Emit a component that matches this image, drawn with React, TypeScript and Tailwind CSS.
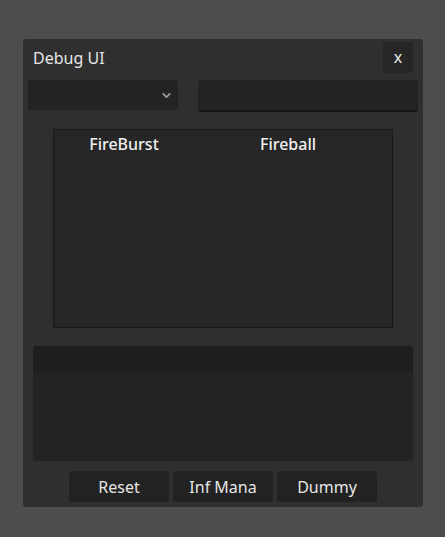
import { ChevronDown } from 'lucide-react';

const spells = ['FireBurst', 'Fireball'];
const actions = ['Reset', 'Inf Mana', 'Dummy'];

export default function App() {
  return (
    <div
      className="w-[445px] h-[537px] bg-[#4d4d4d] pt-[39px] pl-[23px]"
      style={{ fontFamily: '"Noto Sans", "Open Sans", sans-serif' }}
    >
      <div className="w-[400px] h-[468px] bg-[#2f2f2f] rounded-[3px] flex flex-col">
        {/* title bar */}
        <div className="flex items-center justify-between h-[31px] mt-[3px] pl-[10px] pr-[10px]">
          <span className="text-[16px] text-[#e6e6e6]">Debug UI</span>
          <button className="w-[30px] h-[31px] bg-[#262626] rounded-[3px] text-[16px] text-[#e6e6e6] flex items-center justify-center leading-none pb-[2px]">
            x
          </button>
        </div>

        <div className="flex gap-[20px] pl-[5px] pr-[5px] mt-[7px]">
          <div className="w-[150px] h-[30px] bg-[#232323] rounded-[3px] flex items-center justify-end pr-[5px]">
            <ChevronDown className="w-[13px] h-[13px] text-[#a0a0a0]" strokeWidth={3} />
          </div>
          <div className="w-[220px] h-[30px] bg-[#232323] rounded-[3px] shadow-[0_2px_0_#161616]" />
        </div>

        {/* spell list */}
        <div className="ml-[30px] mt-[19px] w-[340px] h-[199px] bg-[#262626] border border-[#171717]">
          <div className="flex gap-[34px] pl-[5px] pt-[2px]">
            {spells.map((s) => (
              <div key={s} className="w-[130px] text-center text-[16px] font-medium text-[#f0f0f0]">
                {s}
              </div>
            ))}
          </div>
        </div>

        {/* log */}
        <div className="ml-[10px] mt-[18px] w-[380px] h-[115px] bg-[#232323] rounded-[3px] overflow-hidden">
          <div className="h-[26px] bg-[#1e1e1e]" />
        </div>

        <div className="flex justify-center gap-[4px] mt-[10px]">
          {actions.map((a) => (
            <button
              key={a}
              className="w-[100px] h-[31px] bg-[#222222] rounded-[3px] text-[16px] text-[#e6e6e6] flex items-center justify-center"
            >
              {a}
            </button>
          ))}
        </div>
      </div>
    </div>
  );
}
